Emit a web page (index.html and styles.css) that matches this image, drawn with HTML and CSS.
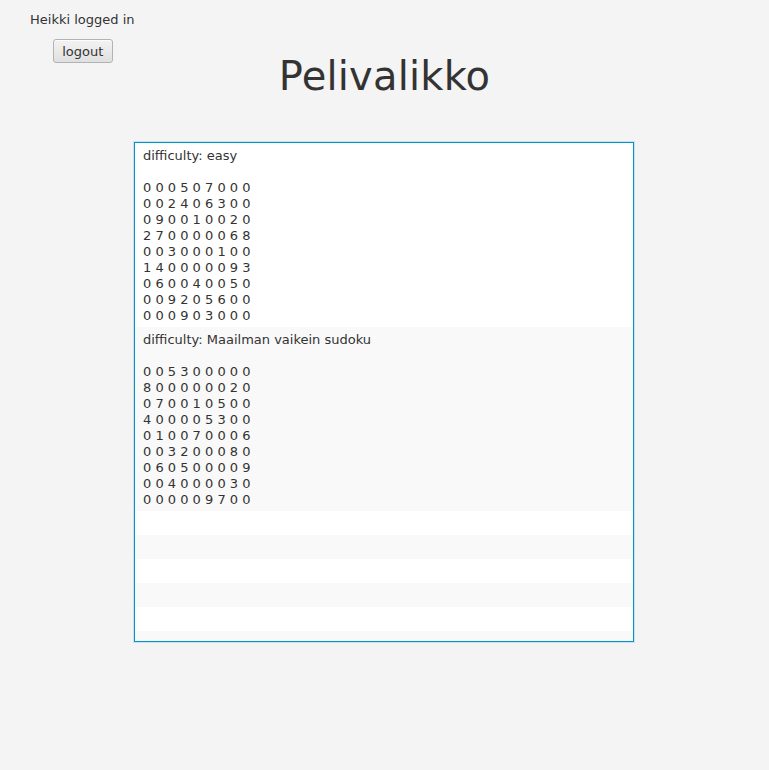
FILE: index.html
```html
<!DOCTYPE html>
<html>
<head>
<meta charset="utf-8">
<link rel="stylesheet" href="styles.css">
</head>
<body>
<div class="header">
  <div class="user">
    <div class="user-label">Heikki logged in</div>
    <button class="btn">logout</button>
  </div>
  <h1 class="title">Pelivalikko</h1>
  <div></div>
</div>
<div class="list">
  <div class="cell cell-even">difficulty: easy

0 0 0 5 0 7 0 0 0
0 0 2 4 0 6 3 0 0
0 9 0 0 1 0 0 2 0
2 7 0 0 0 0 0 6 8
0 0 3 0 0 0 1 0 0
1 4 0 0 0 0 0 9 3
0 6 0 0 4 0 0 5 0
0 0 9 2 0 5 6 0 0
0 0 0 9 0 3 0 0 0</div>
  <div class="cell cell-odd">difficulty: Maailman vaikein sudoku

0 0 5 3 0 0 0 0 0
8 0 0 0 0 0 0 2 0
0 7 0 0 1 0 5 0 0
4 0 0 0 0 5 3 0 0
0 1 0 0 7 0 0 0 6
0 0 3 2 0 0 0 8 0
0 6 0 5 0 0 0 0 9
0 0 4 0 0 0 0 3 0
0 0 0 0 0 9 7 0 0</div>
  <div class="cell empty cell-even"></div>
  <div class="cell empty cell-odd"></div>
  <div class="cell empty cell-even"></div>
  <div class="cell empty cell-odd"></div>
  <div class="cell empty cell-even"></div>
  <div class="cell empty cell-odd"></div>
</div>
</body>
</html>
```

FILE: styles.css
```css
html, body {
  margin: 0;
  padding: 0;
}
body {
  background: #f4f4f4;
  font-family: "DejaVu Sans", sans-serif;
  font-size: 13px;
  color: #333333;
  width: 769px;
  height: 770px;
  overflow: hidden;
}
.header {
  display: grid;
  grid-template-columns: 1fr auto 1fr;
  align-items: start;
}
.user {
  display: flex;
  flex-direction: column;
  align-items: center;
  justify-self: start;
  padding-left: 30px;
  padding-top: 12px;
}
.user-label {
  line-height: 16px;
  color: #333;
  padding-right: 1px;
}
.btn {
  margin-top: 11px;
  margin-left: 0;
  width: 60px;
  height: 24px;
  padding: 0;
  font-family: "DejaVu Sans", sans-serif;
  font-size: 13px;
  color: #333;
  border: 1px solid #b3b3b3;
  border-radius: 3px;
  background: linear-gradient(#f3f3f3, #e0e0e0);
  box-shadow: inset 0 1px 0 #fcfcfc;
}
.title {
  margin: 53px 0 0 0;
  font-family: "DejaVu Sans", sans-serif;
  font-size: 40px;
  font-weight: normal;
  line-height: 47px;
  letter-spacing: 0.2px;
  color: #333333;
}
.list {
  width: 498px;
  height: 498px;
  margin: 42px 0 0 134px;
  border: 1px solid #0096c9;
  box-shadow: 0 0 0 1px rgba(0, 150, 201, 0.18);
  background: #f9f9f9;
  overflow: hidden;
}
.cell {
  white-space: pre;
  line-height: 16px;
  padding: 5px 8px 3px 8px;
  height: 176px;
  color: #333;
}
.cell-even {
  background: #ffffff;
}
.cell-odd {
  background: #f9f9f9;
}
.cell.empty {
  height: 24px;
  padding: 0;
}
```
